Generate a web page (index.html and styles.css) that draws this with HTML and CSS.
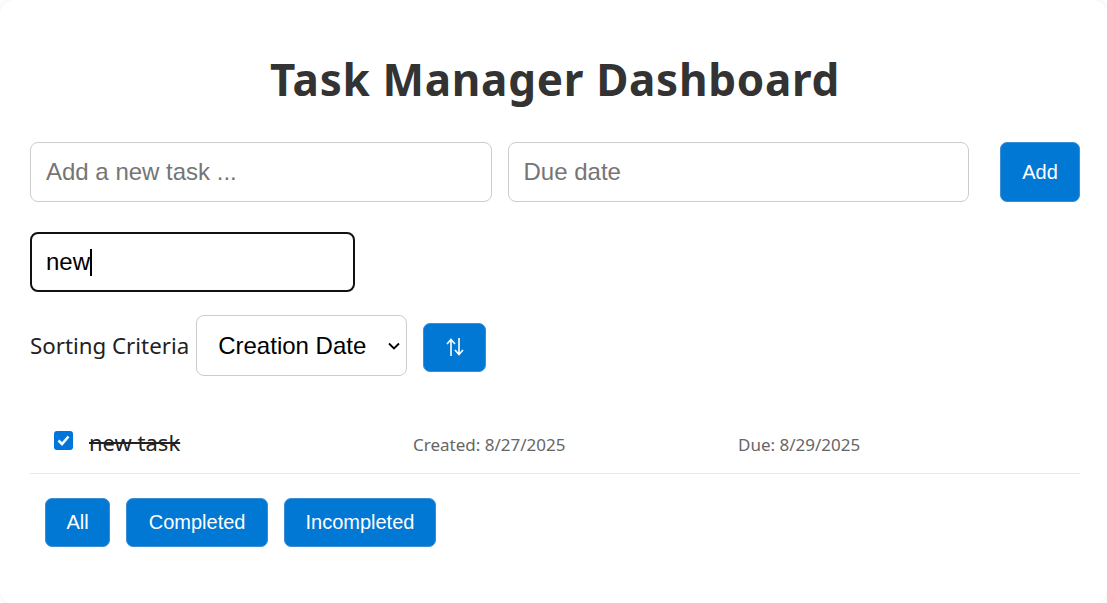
FILE: index.html
```html
<!DOCTYPE html>
<html>
<head>
<meta charset="utf-8">
<link rel="stylesheet" href="styles.css">
</head>
<body>
<div class="card">
  <h1 class="title">Task Manager Dashboard</h1>
  <div class="add-row">
    <input class="field" type="text" placeholder="Add a new task ...">
    <input class="field" type="text" placeholder="Due date">
    <button class="btn btn-add">Add</button>
  </div>
  <div class="search-row">
    <div class="search">new<span class="caret"></span></div>
  </div>
  <div class="sort-row">
    <span class="sort-label">Sorting Criteria</span>
    <div class="select">
      <span>Creation Date</span>
      <svg class="chev" width="14" height="10" viewBox="0 0 14 10"><path d="M2 2.5 L7 7.5 L12 2.5" fill="none" stroke="#000" stroke-width="1.8"/></svg>
    </div>
    <button class="btn btn-sort">
      <svg width="20" height="22" viewBox="0 0 20 22"><path d="M6 20 V4 M2 8 L6 3.5 L10 8 M14 2 V18 M10 14 L14 18.5 L18 14" fill="none" stroke="#fff" stroke-width="1.6"/></svg>
    </button>
  </div>
  <ul class="tasks">
    <li class="task">
      <span class="check"><svg width="19" height="19" viewBox="0 0 19 19"><rect x="0" y="0" width="19" height="19" rx="3" fill="#0075d9"/><path d="M4.5 9.5 L8 13 L14.5 5.5" fill="none" stroke="#fff" stroke-width="2.6"/></svg></span>
      <span class="task-name">new task</span>
      <span class="meta meta-created">Created: 8/27/2025</span>
      <span class="meta">Due: 8/29/2025</span>
    </li>
  </ul>
  <div class="filters">
    <button class="btn btn-filter">All</button>
    <button class="btn btn-filter btn-wide">Completed</button>
    <button class="btn btn-filter">Incompleted</button>
  </div>
</div>
</body>
</html>
```
FILE: styles.css
```css
html, body {
  margin: 0;
  padding: 0;
  background: #ffffff;
}
body {
  font-family: "Noto Sans", "Open Sans", sans-serif;
  color: #333;
}
.card {
  box-sizing: border-box;
  height: 604px;
  background: #fff;
  border-radius: 14px;
  box-shadow: 0 0 6px rgba(0,0,0,0.08);
  padding: 51px 27px 20px 30px;
}
.title {
  margin: 0 0 35px 0;
  text-align: center;
  font-size: 44px;
  line-height: 56px;
  font-weight: 700;
  color: #333;
  letter-spacing: 0.7px;
}
.add-row {
  display: flex;
  gap: 16px;
  align-items: stretch;
}
.field {
  flex: 1;
  min-width: 0;
  box-sizing: border-box;
  height: 60px;
  padding: 0 15px;
  border: 1px solid #ccc;
  border-radius: 8px;
  font-family: "Liberation Sans", Arial, sans-serif;
  font-size: 24px;
  color: #000;
  outline: none;
}
.field::placeholder { color: #757575; }
.btn {
  border: 1px solid #3d8fd4;
  background: #0078d4;
  color: #fff;
  border-radius: 7px;
  font-family: "Liberation Sans", Arial, sans-serif;
  font-size: 20px;
  cursor: pointer;
  padding: 0;
}
.btn-add {
  width: 80px;
  margin-left: 15px;
}
.search-row {
  margin-top: 30px;
}
.search {
  box-sizing: border-box;
  width: 325px;
  height: 60px;
  border: 2px solid #111;
  border-radius: 8px;
  padding: 0 14px;
  font-family: "Liberation Sans", Arial, sans-serif;
  font-size: 24px;
  color: #000;
  display: flex;
  align-items: center;
}
.caret {
  display: inline-block;
  width: 1.5px;
  height: 27px;
  background: #000;
  margin-left: 0;
}
.sort-row {
  margin-top: 23px;
  display: flex;
  align-items: center;
}
.sort-label {
  font-size: 22.3px;
  color: #222;
  margin-right: 7px;
}
.select {
  box-sizing: border-box;
  width: 211px;
  height: 61px;
  border: 1px solid #ccc;
  border-radius: 8px;
  display: flex;
  align-items: center;
  justify-content: space-between;
  padding: 0 5px 0 21px;
  font-family: "Liberation Sans", Arial, sans-serif;
  font-size: 24px;
  color: #000;
}
.chev { margin-top: 1px; }
.btn-sort {
  width: 63px;
  height: 49px;
  margin-left: 16px;
  margin-top: 3px;
  display: flex;
  align-items: center;
  justify-content: center;
}
.tasks {
  list-style: none;
  margin: 40px 0 0 0;
  padding: 0;
}
.task {
  display: flex;
  align-items: center;
  height: 58px;
  border-bottom: 1px solid #e8e8e8;
  padding-left: 24px;
  box-sizing: border-box;
}
.check {
  width: 19px;
  height: 19px;
  display: flex;
  margin-top: -8px;
}
.task-name {
  margin-left: 16px;
  width: 324px;
  font-size: 22px;
  color: #222;
  text-decoration: line-through;
  margin-top: -6px;
}
.meta {
  font-size: 17px;
  color: #666;
}
.meta-created {
  width: 325px;
}
.filters {
  display: flex;
  gap: 16px;
  padding-left: 15px;
  margin-top: 24px;
}
.btn-filter {
  height: 49px;
  padding: 0 20.5px;
  font-size: 20px;
}
.btn-wide {
  padding: 0 21.5px;
}
```
